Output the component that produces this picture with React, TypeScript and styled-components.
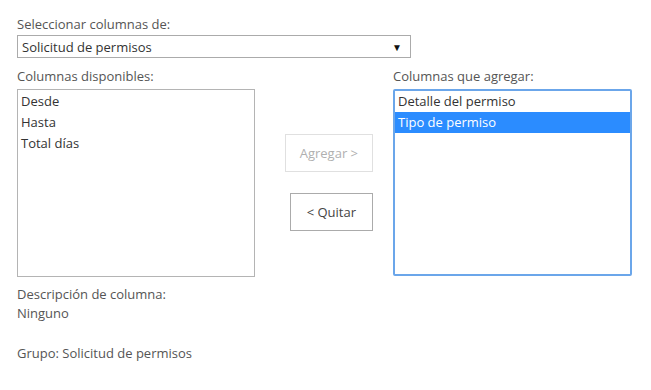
import React from "react";
import styled, { createGlobalStyle } from "styled-components";

const GlobalStyle = createGlobalStyle`
  body {
    margin: 0;
    background: #ffffff;
    font-family: "Open Sans", "Noto Sans", "Liberation Sans", sans-serif;
    font-size: 13px;
    color: #444444;
  }
`;

const StyledPage = styled("div")`
  padding: 15px 0 0 17px;
  width: 634px;
`;

const StyledLabel = styled("div")`
  font-size: 13px;
  line-height: 18px;
  color: #555555;
`;

const StyledSelect = styled("div")`
  margin-top: 2px;
  height: 21px;
  border: 1px solid #ababab;
  display: flex;
  align-items: center;
  justify-content: space-between;
  padding: 0 8px 0 4px;
  width: 380px;
  color: #333333;
  font-size: 13px;
`;

const StyledArrow = styled("span")`
  font-size: 10px;
  color: #111111;
`;

const StyledColumns = styled("div")`
  display: grid;
  grid-template-columns: 238px 138px 239px;
  margin-top: 9px;
`;

const StyledColumn = styled("div")`
  display: flex;
  flex-direction: column;
  gap: 4px;
`;

const StyledList = styled("div")<{ $focused?: boolean }>`
  height: ${(p) => (p.$focused ? 183 : 185)}px;
  border: ${(p) => (p.$focused ? "2px solid #6ba6ea" : "1px solid #b4b4b4")};
  border-radius: ${(p) => (p.$focused ? "2px" : "0")};
  padding: ${(p) => (p.$focused ? "0" : "1px 0 0 0")};
  display: flex;
  flex-direction: column;
`;

const StyledItem = styled("div")<{ $selected?: boolean }>`
  height: 21px;
  line-height: 21px;
  padding-left: 3px;
  font-size: 13px;
  color: ${(p) => (p.$selected ? "#ffffff" : "#333333")};
  background: ${(p) => (p.$selected ? "#2b8cff" : "transparent")};
`;

const StyledButtons = styled("div")`
  display: flex;
  flex-direction: column;
  align-items: flex-end;
  padding: 67px 20px 0 0;
  gap: 21px;
`;

const StyledButton = styled("button")<{ $disabled?: boolean; $pad: number }>`
  font-family: inherit;
  font-size: 13px;
  background: #ffffff;
  height: 38px;
  padding: 0 ${(p) => p.$pad}px;
  border: 1px solid ${(p) => (p.$disabled ? "#e0e0e0" : "#ababab")};
  color: ${(p) => (p.$disabled ? "#b0b0b0" : "#444444")};
  cursor: ${(p) => (p.$disabled ? "default" : "pointer")};
`;

const StyledFooter = styled("div")`
  margin-top: 8px;
  display: flex;
  flex-direction: column;
`;

const StyledFooterLine = styled("div")<{ $gap?: boolean }>`
  font-size: 13px;
  line-height: 19px;
  color: #555555;
  margin-top: ${(p) => (p.$gap ? "21px" : "0")};
`;

const available = ["Desde", "Hasta", "Total días"];
const toAdd = ["Detalle del permiso", "Tipo de permiso"];

const App = () => {
  return (
    <>
      <GlobalStyle />
      <StyledPage>
        <StyledLabel>Seleccionar columnas de:</StyledLabel>
        <StyledSelect>
          <span>Solicitud de permisos</span>
          <StyledArrow>▼</StyledArrow>
        </StyledSelect>
        <StyledColumns>
          <StyledColumn>
            <StyledLabel>Columnas disponibles:</StyledLabel>
            <StyledList>
              {available.map((item) => (
                <StyledItem key={item}>{item}</StyledItem>
              ))}
            </StyledList>
          </StyledColumn>
          <StyledButtons>
            <StyledButton $disabled $pad={14}>
              Agregar &gt;
            </StyledButton>
            <StyledButton $pad={16}>&lt; Quitar</StyledButton>
          </StyledButtons>
          <StyledColumn>
            <StyledLabel>Columnas que agregar:</StyledLabel>
            <StyledList $focused>
              {toAdd.map((item) => (
                <StyledItem key={item} $selected={item === "Tipo de permiso"}>
                  {item}
                </StyledItem>
              ))}
            </StyledList>
          </StyledColumn>
        </StyledColumns>
        <StyledFooter>
          <StyledFooterLine>Descripción de columna:</StyledFooterLine>
          <StyledFooterLine>Ninguno</StyledFooterLine>
          <StyledFooterLine $gap>Grupo: Solicitud de permisos</StyledFooterLine>
        </StyledFooter>
      </StyledPage>
    </>
  );
};

export default App;
